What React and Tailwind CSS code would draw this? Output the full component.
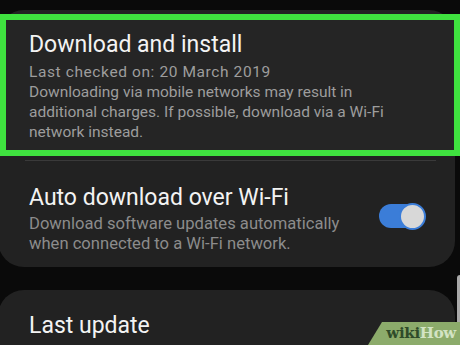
import React from "react";

export default function App() {
  const font = { fontFamily: "Roboto, 'Noto Sans', sans-serif" };
  return (
    <div
      className="relative w-[460px] h-[345px] overflow-hidden bg-[#0a0a0a]"
      style={font}
    >
      <div className="flex flex-col pt-[10px]">
        {/* Card 1 */}
        <div className="ml-[-2px] w-[457px] h-[257px] rounded-[26px] bg-[#222222] flex flex-col">
          {/* highlighted section */}
          <div className="mt-[4px] ml-[2px] w-[460px] h-[142px] border-[6px] border-[#3fe23f] bg-[#252525] pl-[23px] pt-[11px]">
            <div className="text-[23px] leading-[28px] text-[#f3f3f3]">
              Download and install
            </div>
            <div className="mt-[3px] text-[15.5px] leading-[20px] text-[#9d9d9d]">
              <div className="tracking-[0.6px]">Last checked on: 20 March 2019</div>
              <div>Downloading via mobile networks may result in</div>
              <div>additional charges. If possible, download via a Wi-Fi</div>
              <div>network instead.</div>
            </div>
          </div>
          <div className="mt-[4px] ml-[27px] w-[411px] h-[1px] bg-[#3a3a3a]" />
          <div className="flex items-center pl-[31px] pr-[30px] pt-[23px]">
            <div className="flex-1">
              <div className="text-[23px] leading-[28px] text-[#f3f3f3]">
                Auto download over Wi-Fi
              </div>
              <div className="mt-[2px] text-[16.6px] leading-[20px] text-[#8c8c8c]">
                <div>Download software updates automatically</div>
                <div>when connected to a Wi-Fi network.</div>
              </div>
            </div>
            <div className="w-[46px] h-[24px] rounded-full bg-[#3b7dd8] flex items-center justify-end mt-[-6px]">
              <div className="w-[27px] h-[27px] rounded-full bg-[#d8d8d8] border-[2px] border-[#3b7dd8] mr-[-1px]" />
            </div>
          </div>
        </div>
        {/* Card 2 */}
        <div className="mt-[23px] ml-[-2px] w-[457px] h-[120px] rounded-[26px] bg-[#222222] pl-[31px] pt-[22px]">
          <div className="text-[23px] leading-[28px] text-[#f3f3f3]">Last update</div>
        </div>
      </div>

      {/* scrollbar */}
      <div className="absolute right-0 top-[275px] w-[3px] h-[70px] bg-[#a9a9a9] rounded-l-sm" />

      {/* wikiHow watermark */}
      <div
        className="absolute right-0 bottom-0 w-[92px] h-[23px] bg-[#8cab6b] flex items-center justify-end pr-[4px]"
        style={{ clipPath: "polygon(14px 0, 100% 0, 100% 100%, 0 100%)" }}
      >
        <span
          className="text-[15px] font-bold leading-none tracking-[-0.3px]"
          style={{ fontFamily: "'DejaVu Serif', 'Liberation Serif', serif" }}
        >
          <span className="text-[#2f4b29]">wiki</span>
          <span className="text-[#d3e3c4]">How</span>
        </span>
      </div>
    </div>
  );
}
